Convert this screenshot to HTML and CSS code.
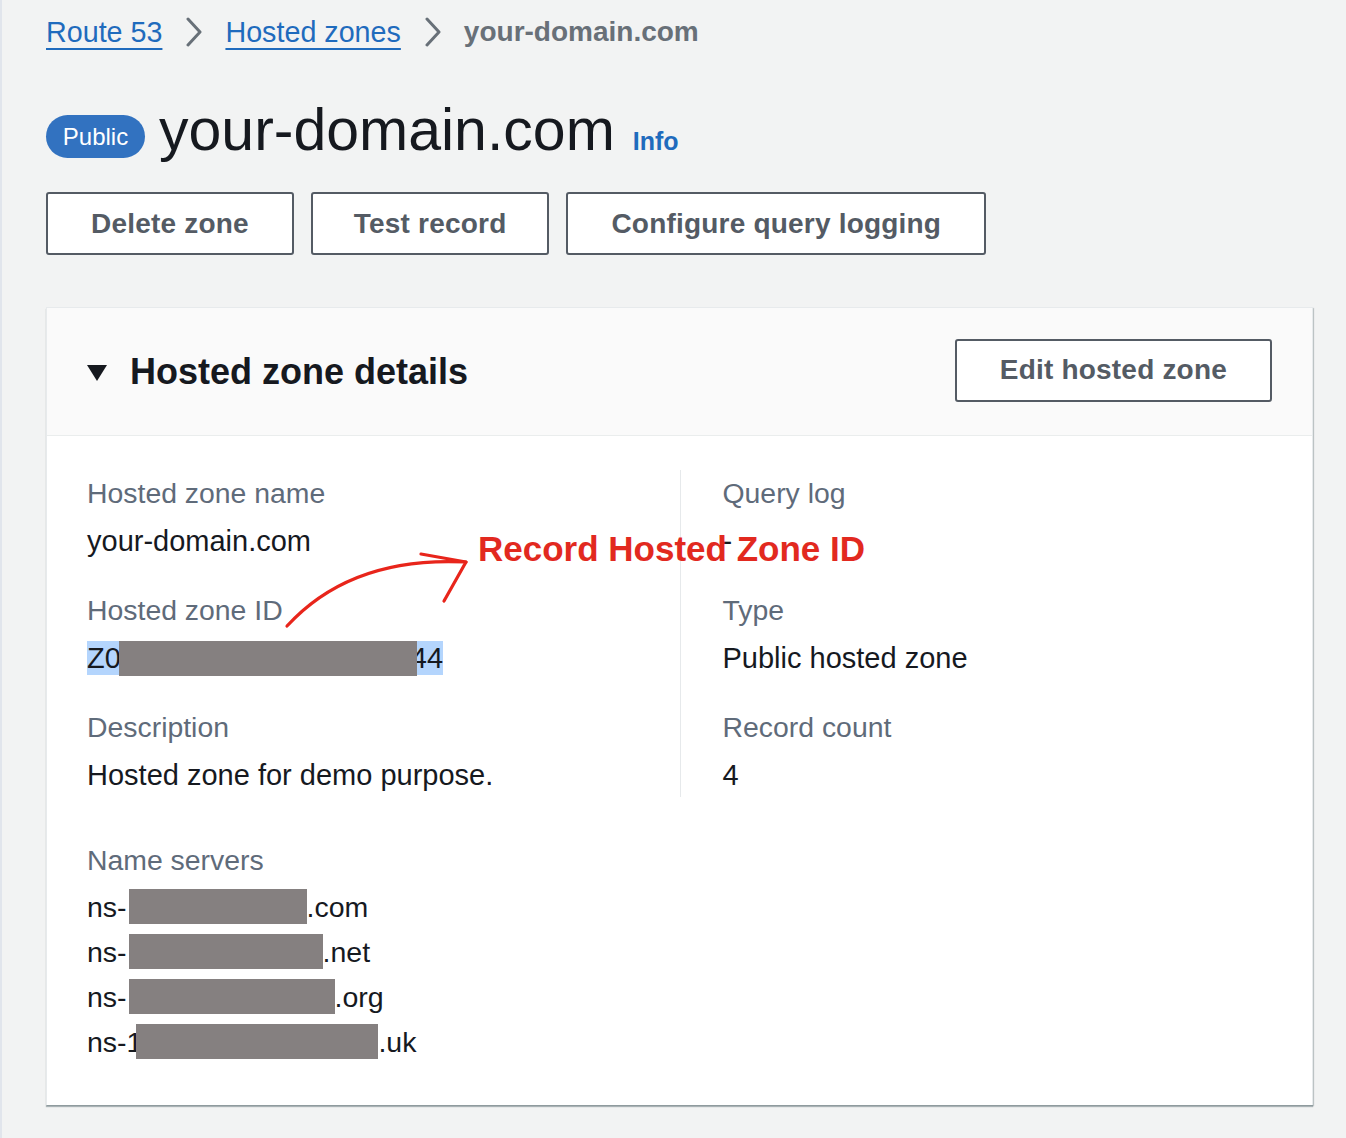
FILE: index.html
```html
<!DOCTYPE html>
<html lang="en">
<head>
<meta charset="utf-8">
<title>your-domain.com - Route 53</title>
<link rel="stylesheet" href="styles.css">
</head>
<body>
<div class="page">
  <nav class="crumbs">
    <a class="crumb-link" href="#">Route 53</a>
    <svg class="chev" viewBox="0 0 18 30" width="18" height="30"><polyline points="3,2 15,15 3,28" /></svg>
    <a class="crumb-link" href="#">Hosted zones</a>
    <svg class="chev" viewBox="0 0 18 30" width="18" height="30"><polyline points="3,2 15,15 3,28" /></svg>
    <span class="crumb-current">your-domain.com</span>
  </nav>

  <div class="title-row">
    <span class="badge">Public</span>
    <h1 class="title">your-domain.com<a class="info" href="#">Info</a></h1>
  </div>

  <div class="actions">
    <button class="btn">Delete zone</button>
    <button class="btn btn-narrow">Test record</button>
    <button class="btn">Configure query logging</button>
  </div>

  <section class="card">
    <header class="card-head">
      <div class="card-title">
        <svg class="caret" viewBox="0 0 20 16" width="20" height="16"><polygon points="0,0 20,0 10,16" /></svg>
        <h2>Hosted zone details</h2>
      </div>
      <button class="btn">Edit hosted zone</button>
    </header>

    <div class="card-body">
      <div class="cols">
        <div class="col">
          <div class="field">
            <div class="label">Hosted zone name</div>
            <div class="value">your-domain.com</div>
          </div>
          <div class="field">
            <div class="label">Hosted zone ID</div>
            <div class="value"><span class="sel">Z0<span class="redact w-id"></span><span class="tail">44</span></span></div>
          </div>
          <div class="field">
            <div class="label">Description</div>
            <div class="value">Hosted zone for demo purpose.</div>
          </div>
        </div>
        <div class="col col-right">
          <div class="field">
            <div class="label">Query log</div>
            <div class="value">-</div>
          </div>
          <div class="field">
            <div class="label">Type</div>
            <div class="value">Public hosted zone</div>
          </div>
          <div class="field">
            <div class="label">Record count</div>
            <div class="value">4</div>
          </div>
        </div>
      </div>

      <div class="ns">
        <div class="label">Name servers</div>
        <div class="ns-list">
          <div class="ns-line">ns-<span class="redact w1"></span>.com</div>
          <div class="ns-line">ns-<span class="redact w2"></span>.net</div>
          <div class="ns-line">ns-<span class="redact w3"></span>.org</div>
          <div class="ns-line">ns-1<span class="redact w4"></span>.uk</div>
        </div>
      </div>
    </div>

    <div class="note">Record Hosted Zone ID</div>
    <svg class="arrow" viewBox="0 0 250 100" width="250" height="100">
      <path d="M10,88 Q74,18 189,24" />
      <path d="M144,16 L189,24 L167,63" />
    </svg>
  </section>
</div>
</body>
</html>
```

FILE: styles.css
```css
* { box-sizing: border-box; }

html, body {
  margin: 0;
  padding: 0;
}

body {
  background: #f2f3f3;
  font-family: "Liberation Sans", Arial, sans-serif;
  color: #16191f;
  border-left: 2px solid #e1e5ec;
  min-height: 1138px;
}

.page {
  padding: 12px 33px 0 44px;
}

/* Breadcrumbs */
.crumbs {
  display: flex;
  align-items: center;
  height: 40px;
  font-size: 28.7px;
  line-height: 40px;
}

.crumb-link {
  color: #1f6bbd;
  text-decoration: underline;
  text-decoration-thickness: 2px;
  text-underline-offset: 6px;
}

.chev {
  margin: 0 22px 0 23px;
  fill: none;
  stroke: #687078;
  stroke-width: 3;
  stroke-linecap: round;
  stroke-linejoin: round;
}

.crumb-current {
  color: #687078;
  font-weight: 700;
  font-size: 28px;
}

/* Title */
.title-row {
  display: flex;
  align-items: center;
  margin-top: 52px;
  height: 62px;
}

.badge {
  display: inline-flex;
  align-items: center;
  justify-content: center;
  width: 99px;
  height: 43px;
  border-radius: 22px;
  background: #3272c0;
  color: #ffffff;
  font-size: 24px;
  margin-top: 3px;
  margin-right: 14px;
}

.title {
  margin: 0;
  font-size: 59px;
  line-height: 62px;
  font-weight: 400;
  color: #16191f;
}

.info {
  margin-left: 18px;
  font-size: 25px;
  font-weight: 700;
  color: #1f6bbd;
  text-decoration: none;
}

/* Buttons */
.actions {
  display: flex;
  gap: 17px;
  margin-top: 26px;
}

.btn {
  height: 63px;
  padding: 0 43px;
  background: #ffffff;
  border: 2px solid #545b64;
  border-radius: 3px;
  color: #545b64;
  font-family: "Liberation Sans", Arial, sans-serif;
  font-size: 28px;
  font-weight: 700;
  letter-spacing: 0.2px;
}

.btn-narrow {
  padding: 0 41px;
}

/* Card */
.card {
  position: relative;
  margin-top: 52px;
  background: #ffffff;
  border: 1px solid #e7eaec;
  border-bottom: none;
  box-shadow: 0 2px 1px 0 rgba(0, 28, 36, 0.28), 1px 1px 1px 0 rgba(0, 28, 36, 0.18);
  width: 1267px;
}

.card-head {
  display: flex;
  align-items: center;
  justify-content: space-between;
  height: 128px;
  padding: 0 40px;
  background: #fafafa;
  border-bottom: 1px solid #eaeded;
}

.card-head .btn {
  margin-top: -3px;
}

.card-title {
  display: flex;
  align-items: center;
  gap: 23px;
}

.caret {
  fill: #16191f;
  margin-top: 2px;
}

.card-title h2 {
  margin: 0;
  font-size: 36px;
  font-weight: 700;
  color: #16191f;
}

.card-body {
  padding: 37px 40px 40px;
}

.cols {
  display: grid;
  grid-template-columns: 1fr 1fr;
}

.col {
  display: flex;
  flex-direction: column;
  gap: 29px;
}

.col-right {
  border-left: 1px solid #e6e9eb;
  padding-left: 42px;
  margin-top: -3px;
  padding-top: 3px;
  padding-bottom: 2px;
}

.label {
  font-size: 28.4px;
  line-height: 40px;
  color: #5f6b7a;
}

.value {
  margin-top: 8px;
  font-size: 29px;
  line-height: 40px;
  color: #16191f;
}

.sel {
  display: inline-flex;
  align-items: center;
  height: 34px;
  background: #b4d5fd;
  vertical-align: middle;
  position: relative;
  top: -2px;
}

.redact {
  display: inline-block;
  position: relative;
  z-index: 1;
  height: 35px;
  background: #858080;
}

.w-id { width: 298px; margin-left: -2px; }
.tail { margin-left: -6px; }

/* Name servers */
.ns {
  margin-top: 43px;
}

.ns-list {
  margin-top: 5px;
}

.ns-line {
  display: flex;
  align-items: center;
  height: 45px;
  font-size: 28.5px;
  color: #16191f;
}

.ns-line .redact { margin-top: -3px; }
.w1 { width: 178px; margin-left: 2px; }
.w2 { width: 194px; margin-left: 2px; }
.w3 { width: 206px; margin-left: 2px; }
.w4 { width: 242px; margin-left: -6px; }

/* Annotation overlay */
.note {
  position: absolute;
  left: 431px;
  top: 221px;
  font-size: 35px;
  line-height: 40px;
  font-weight: 700;
  color: #e2291f;
  white-space: nowrap;
}

.arrow {
  position: absolute;
  left: 230px;
  top: 230px;
  fill: none;
  stroke: #e8251b;
  stroke-width: 3.2;
  stroke-linecap: round;
  stroke-linejoin: round;
}
```
